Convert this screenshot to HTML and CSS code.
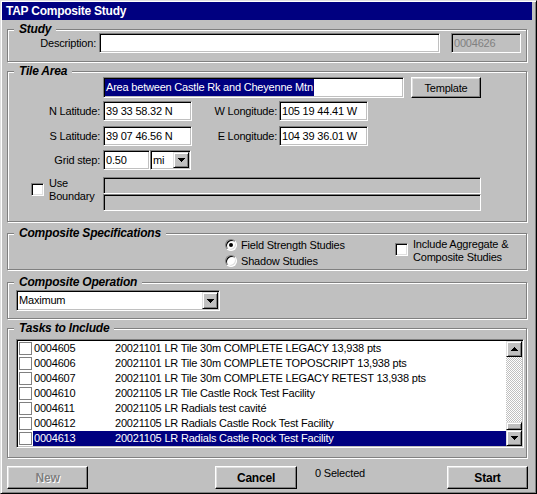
FILE: index.html
```html
<!DOCTYPE html>
<html>
<head>
<meta charset="utf-8">
<title>TAP Composite Study</title>
<link rel="stylesheet" href="styles.css">
</head>
<body>
<div class="window">
  <div class="titlebar">TAP Composite Study</div>
  <div class="content">

    <div class="group g-study">
      <div class="legend">Study</div>
      <div class="study-row">
        <span class="lbl lbl-desc">Description:</span>
        <div class="field f-desc"></div>
        <div class="field f-id">0004626</div>
      </div>
    </div>

    <div class="group g-tile">
      <div class="legend">Tile Area</div>
      <div class="tile-body">
        <div class="r-name">
          <div class="field f-name"><span class="sel">Area between Castle Rk and Cheyenne Mtn</span></div>
          <div class="btn b-template">Template</div>
        </div>
        <div class="r-coord r-n">
          <span class="lbl l1">N Latitude:</span><div class="field f-coord">39 33 58.32 N</div>
          <span class="lbl l2">W Longitude:</span><div class="field f-coord">105 19 44.41 W</div>
        </div>
        <div class="r-coord r-s">
          <span class="lbl l1">S Latitude:</span><div class="field f-coord">39 07 46.56 N</div>
          <span class="lbl l2">E Longitude:</span><div class="field f-coord">104 39 36.01 W</div>
        </div>
        <div class="r-coord r-g">
          <span class="lbl l1">Grid step:</span><div class="field f-grid">0.50</div>
          <div class="combo c-unit">
            <span class="combo-text">mi</span>
            <span class="combo-btn"><svg width="7" height="4" viewBox="0 0 7 4"><path d="M0 0h7v1h-1v1h-1v1h-1v1h-1v-1h-1v-1h-1v-1h-1z"/></svg></span>
          </div>
        </div>
        <div class="r-bound">
          <div class="bound-left">
            <span class="chk chk-use"></span>
            <span class="bound-lbl">Use<br>Boundary</span>
          </div>
          <div class="bound-boxes">
            <div class="bbox"></div>
            <div class="bbox"></div>
          </div>
        </div>
      </div>
    </div>

    <div class="group g-spec">
      <div class="legend">Composite Specifications</div>
      <div class="spec-body">
        <div class="radios">
          <div class="radio-row"><span class="radio on"></span><span class="rlbl">Field Strength Studies</span></div>
          <div class="radio-row"><span class="radio"></span><span class="rlbl">Shadow Studies</span></div>
        </div>
        <div class="agg">
          <span class="chk chk-agg"></span>
          <span class="agg-lbl">Include Aggregate &amp;<br>Composite Studies</span>
        </div>
      </div>
    </div>

    <div class="group g-op">
      <div class="legend">Composite Operation</div>
      <div class="combo c-op">
        <span class="combo-text">Maximum</span>
        <span class="combo-btn"><svg width="7" height="4" viewBox="0 0 7 4"><path d="M0 0h7v1h-1v1h-1v1h-1v1h-1v-1h-1v-1h-1v-1h-1z"/></svg></span>
      </div>
    </div>

    <div class="group g-tasks">
      <div class="legend">Tasks to Include</div>
      <div class="list">
        <div class="rows">
          <div class="trow"><span class="fchk"></span><div class="cells"><span class="cid">0004605</span><span class="cdesc">20021101 LR Tile 30m COMPLETE LEGACY 13,938 pts</span></div></div>
          <div class="trow"><span class="fchk"></span><div class="cells"><span class="cid">0004606</span><span class="cdesc">20021101 LR Tile 30m COMPLETE TOPOSCRIPT 13,938 pts</span></div></div>
          <div class="trow"><span class="fchk"></span><div class="cells"><span class="cid">0004607</span><span class="cdesc">20021101 LR Tile 30m COMPLETE LEGACY RETEST 13,938 pts</span></div></div>
          <div class="trow"><span class="fchk"></span><div class="cells"><span class="cid">0004610</span><span class="cdesc">20021105 LR Tile Castle Rock Test Facility</span></div></div>
          <div class="trow"><span class="fchk"></span><div class="cells"><span class="cid">0004611</span><span class="cdesc">20021105 LR Radials test cavité</span></div></div>
          <div class="trow"><span class="fchk"></span><div class="cells"><span class="cid">0004612</span><span class="cdesc">20021105 LR Radials Castle Rock Test Facility</span></div></div>
          <div class="trow"><span class="fchk"></span><div class="cells selected"><span class="cid">0004613</span><span class="cdesc">20021105 LR Radials Castle Rock Test Facility</span></div></div>
        </div>
        <div class="sb">
          <span class="sb-btn"><svg width="7" height="4" viewBox="0 0 7 4"><path d="M3 0h1v1h1v1h1v1h1v1h-7v-1h1v-1h1v-1h1z"/></svg></span>
          <div class="sb-track"><span class="sb-thumb"></span></div>
          <span class="sb-btn"><svg width="7" height="4" viewBox="0 0 7 4"><path d="M0 0h7v1h-1v1h-1v1h-1v1h-1v-1h-1v-1h-1v-1h-1z"/></svg></span>
        </div>
      </div>
    </div>

    <div class="buttons">
      <div class="btn bold b-new disabled">New</div>
      <div class="btn bold b-cancel">Cancel</div>
      <span class="sel-count">0 Selected</span>
      <div class="btn bold b-start">Start</div>
    </div>

  </div>
</div>
</body>
</html>
```

FILE: styles.css
```css
* { box-sizing: border-box; margin: 0; padding: 0; }
html, body { width: 537px; height: 494px; overflow: hidden; }
body {
  background: #c0c0c0;
  font-family: "Liberation Sans", Arial, sans-serif;
  font-size: 11px;
  letter-spacing: -0.2px;
  color: #000;
}

.window {
  width: 537px;
  height: 494px;
  background: #c0c0c0;
  border: 1px solid;
  border-color: #dfdfdf #000 #000 #dfdfdf;
  box-shadow: inset 1px 1px #fff, inset -1px -1px #808080;
  padding: 1px 0 0 1px;
}

.titlebar {
  width: 530px;
  height: 18px;
  background: #000080;
  color: #fff;
  font-weight: bold;
  font-size: 12px;
  letter-spacing: -0.25px;
  line-height: 18px;
  padding-left: 4px;
  white-space: nowrap;
}

.content { padding-left: 5px; }

/* group boxes */
.group {
  position: relative;
  width: 520px;
  border: 1px solid #808080;
  box-shadow: inset 1px 1px #fff, 1px 1px #fff;
}
.legend {
  position: absolute;
  top: -8px;
  left: 6px;
  padding: 0 5px;
  background: #c0c0c0;
  font-weight: bold;
  font-style: italic;
  font-size: 12px;
  line-height: 14px;
  letter-spacing: -0.2px;
  white-space: nowrap;
}

.g-study { margin-top: 9px; height: 33px; }
.g-tile  { margin-top: 9px; height: 151px; }
.g-spec  { margin-top: 11px; height: 37px; }
.g-op    { margin-top: 12px; height: 37px; }
.g-tasks { margin-top: 9px; height: 130px; }

/* generic controls */
.lbl { line-height: 20px; text-align: right; white-space: nowrap; }

.field {
  background: #fff;
  border: 1px solid;
  border-color: #808080 #fff #fff #808080;
  box-shadow: inset 1px 1px #000, inset -1px -1px #c0c0c0;
  padding: 1px 2px;
  line-height: 16px;
  white-space: nowrap;
  overflow: hidden;
}

.btn {
  display: flex;
  align-items: center;
  justify-content: center;
  background: #c0c0c0;
  border: 1px solid;
  border-color: #fff #000 #000 #fff;
  box-shadow: inset -1px -1px #808080, inset 1px 1px #dfdfdf;
  white-space: nowrap;
}
.btn.bold { font-weight: bold; font-size: 12px; letter-spacing: -0.2px; }
.btn.disabled { color: #808080; text-shadow: 1px 1px #fff; }

.chk {
  display: block;
  width: 13px;
  height: 13px;
  background: #fff;
  border: 1px solid;
  border-color: #808080 #fff #fff #808080;
  box-shadow: inset 1px 1px #000, inset -1px -1px #dfdfdf;
  flex: none;
}

.radio {
  display: flex;
  align-items: center;
  justify-content: center;
  width: 12px;
  height: 12px;
  border-radius: 50%;
  background: #fff;
  border: 1px solid;
  border-color: #808080 #fff #fff #808080;
  box-shadow: inset 1px 1px #000, inset -1px -1px #dfdfdf;
  flex: none;
}
.radio.on::after {
  content: "";
  width: 4px;
  height: 4px;
  border-radius: 50%;
  background: #000;
}

.combo {
  display: flex;
  background: #fff;
  border: 1px solid;
  border-color: #808080 #fff #fff #808080;
  box-shadow: inset 1px 1px #000, inset -1px -1px #c0c0c0;
  padding: 1px;
}
.combo-text { flex: 1; padding-left: 1px; white-space: nowrap; }
.combo-btn {
  display: flex;
  align-items: center;
  justify-content: center;
  width: 16px;
  background: #c0c0c0;
  border: 1px solid;
  border-color: #dfdfdf #000 #000 #dfdfdf;
  box-shadow: inset 1px 1px #fff, inset -1px -1px #808080;
  flex: none;
}
.combo-btn svg, .sb-btn svg { display: block; fill: #000; }

/* study */
.study-row { display: flex; padding-top: 3px; }
.lbl-desc { width: 88px; }
.f-desc { margin-left: 3px; width: 341px; height: 20px; }
.f-id {
  margin-left: 11px;
  width: 70px;
  height: 20px;
  background: #c0c0c0;
  color: #808080;
}

/* tile area */
.tile-body { padding-top: 5px; }
.r-name { display: flex; margin-left: 95px; }
.f-name { width: 301px; height: 21px; padding: 1px 1px; line-height: 17px; }
.sel { display: inline-block; background: #000080; color: #fff; padding: 0 1px; line-height: 17px; }
.b-template { margin-left: 7px; width: 70px; height: 21px; }

.r-coord { display: flex; height: 20px; }
.r-n { margin-top: 3px; }
.r-s { margin-top: 5px; }
.r-g { margin-top: 4px; }
.l1 { width: 92px; margin-right: 3px; }
.l2 { width: 85px; margin-right: 2px; }
.f-coord { width: 89px; height: 20px; }
.f-grid { width: 47px; height: 20px; }
.c-unit { width: 41px; height: 20px; }
.c-unit .combo-text { padding-left: 1px; line-height: 16px; }

.r-bound { display: flex; margin-top: 7px; }
.bound-left { display: flex; width: 95px; }
.chk-use { margin: 6px 0 0 23px; }
.bound-lbl { margin-left: 5px; line-height: 13px; }
.bound-boxes { width: 378px; }
.bbox {
  height: 17px;
  border: 1px solid;
  border-color: #808080 #fff #fff #808080;
  box-shadow: inset 1px 1px #000, inset -1px -1px #c0c0c0;
}

/* composite specifications */
.spec-body { display: flex; padding-top: 3px; }
.radios { margin-left: 217px; width: 170px; }
.radio-row { display: flex; height: 16px; line-height: 16px; }
.radio-row .radio { margin-top: 2px; }
.rlbl { margin-left: 4px; white-space: nowrap; }
.agg { display: flex; margin-top: 1px; }
.chk-agg { margin-top: 5px; }
.agg-lbl { margin-left: 5px; line-height: 13px; white-space: nowrap; }

/* composite operation */
.c-op { margin: 7px 0 0 8px; width: 204px; height: 21px; }
.c-op .combo-text { line-height: 17px; }

/* tasks */
.list {
  display: flex;
  margin: 10px 0 0 8px;
  width: 508px;
  height: 109px;
  background: #fff;
  border: 1px solid;
  border-color: #808080 #fff #fff #808080;
  box-shadow: inset 1px 1px #000, inset -1px -1px #c0c0c0;
  padding: 1px;
}
.rows { flex: 1; }
.trow { display: flex; height: 15px; }
.fchk {
  display: block;
  width: 13px;
  height: 13px;
  margin: 1px;
  border: 1px solid #808080;
  background: #fff;
  flex: none;
}
.cells { flex: 1; display: flex; padding-left: 1px; line-height: 15px; white-space: nowrap; }
.cells.selected { background: #000080; color: #fff; }
.cid { width: 81px; }

.sb { width: 16px; display: flex; flex-direction: column; }
.sb-btn {
  display: flex;
  align-items: center;
  justify-content: center;
  height: 16px;
  background: #c0c0c0;
  border: 1px solid;
  border-color: #dfdfdf #000 #000 #dfdfdf;
  box-shadow: inset 1px 1px #fff, inset -1px -1px #808080;
  flex: none;
}
.sb-track {
  flex: 1;
  display: flex;
  flex-direction: column;
  justify-content: flex-end;
  background: repeating-conic-gradient(#c0c0c0 0 25%, #fff 0 50%) 0 0 / 2px 2px;
}
.sb-thumb {
  display: block;
  height: 8px;
  background: #c0c0c0;
  border: 1px solid;
  border-color: #dfdfdf #000 #000 #dfdfdf;
  box-shadow: inset 1px 1px #fff, inset -1px -1px #808080;
}

/* bottom buttons */
.buttons { display: flex; width: 521px; height: 23px; margin-top: 8px; }
.b-new { width: 81px; }
.b-cancel { margin-left: 127px; width: 82px; }
.sel-count { margin-left: 18px; line-height: 14px; white-space: nowrap; }
.b-start { margin-left: auto; width: 81px; }
```
